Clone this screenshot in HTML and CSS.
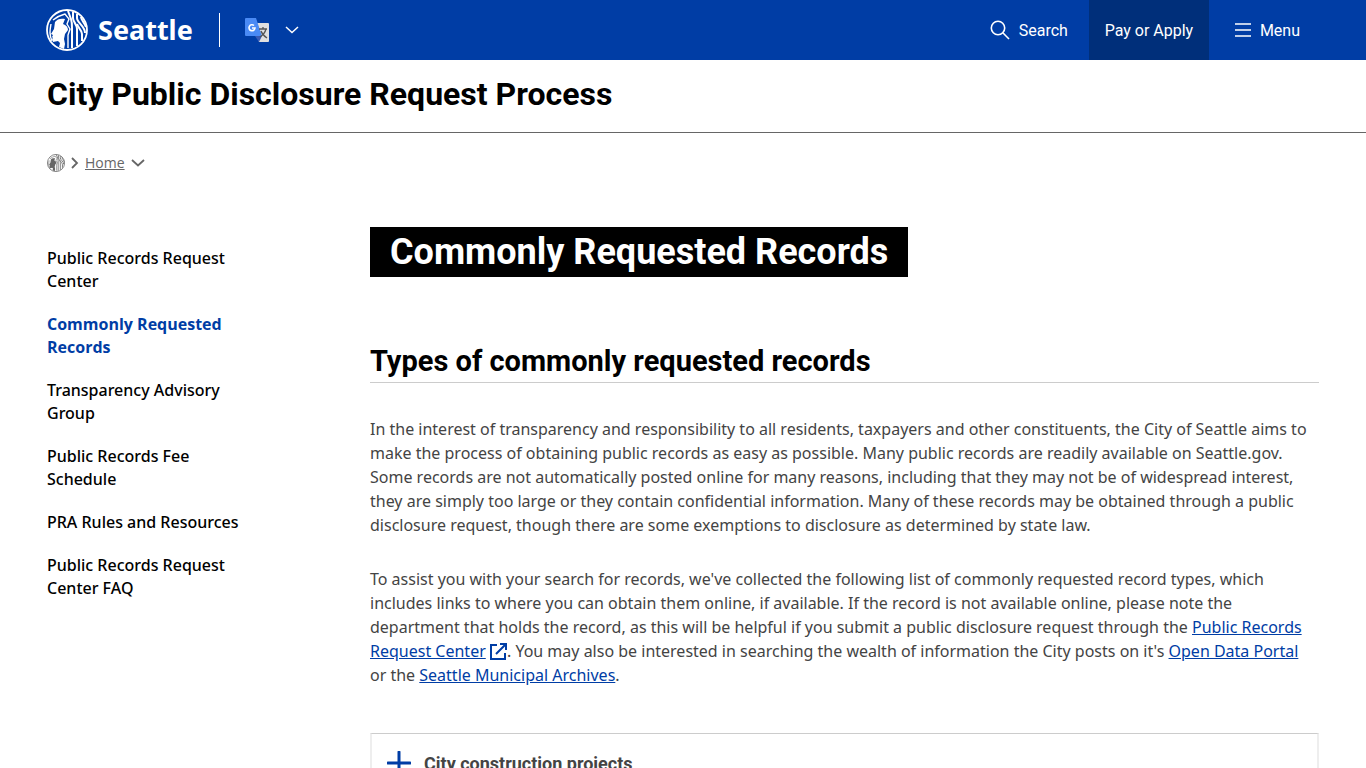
FILE: index.html
```html
<!DOCTYPE html>
<html lang="en">
<head>
    <meta charset="UTF-8">
    <meta name="viewport" content="width=device-width, initial-scale=1.0">
    <title>Commonly Requested Records - City Public Disclosure Request Process</title>
    <link rel="stylesheet" href="styles.css">
</head>
<body>
    <!-- Seal shared by the header and the breadcrumb -->
    <svg class="sprite" width="0" height="0" aria-hidden="true">
        <symbol id="seal" viewBox="0 0 42 42">
            <circle cx="21" cy="21" r="20" fill="none" stroke="currentColor" stroke-width="1.8"/>
            <path fill="currentColor" d="M9 13c2-3 6-4 10-3l-2 5c3 1 5 3 5 6l-3 4-1 5 1 5-1 5-5-2 1-4-2-2-5 1-1-3 1-1-1-1 1-2-2-1 3-5z"/>
            <g fill="none" stroke="currentColor" stroke-width="2">
                <path d="M7 11c4-3 8-5 12-6l4 5-2 5 3 5-2 6v13" stroke-width="1.4"/>
                <path d="M5 15c-1 6-2 10 1 17" stroke-width="1.4"/>
                <path d="M22 2l3 8c1 3 1 6 1 9v20"/>
                <path d="M27 3v6c0 4 4 6 4 11v17"/>
                <path d="M31 5v4c0 5 8 8 8 15"/>
                <path d="M31 15c1 4 5 6 5 10v7"/>
                <path d="M35 8c0 3 4 6 5 10"/>
            </g>
        </symbol>
    </svg>

    <header class="topbar">
        <a class="brand" href="#">
            <svg class="brand-seal" aria-hidden="true"><use href="#seal"/></svg>
            <span>Seattle</span>
        </a>
        <button class="translate" type="button" aria-label="Translate this page">
            <svg width="26" height="26" viewBox="0 0 26 26" aria-hidden="true">
                <path fill="#e0e0e0" d="M10 6h14a1 1 0 0 1 1 1v17a1 1 0 0 1-1 1H15z"/>
                <path fill="#3a5bb5" d="M11 19h7l-3 6z"/>
                <path fill="#4a8af4" d="M2 1h10l6 18H2a1 1 0 0 1-1-1V2a1 1 0 0 1 1-1z"/>
                <path fill="none" stroke="#fff" stroke-width="1.6" d="M10 8.500a3 3 0 1 0 1 2.500H8"/>
                <path fill="none" stroke="#555" stroke-width="1.3" d="M15 12h8M19 10v2M22 12c-1 4-3 6-6 8M17 14c1 3 3 5 6 7"/>
            </svg>
            <svg width="14" height="8" viewBox="0 0 14 8" aria-hidden="true">
                <path fill="none" stroke="currentColor" stroke-width="1.5" d="M1 1l6 5.5L13 1"/>
            </svg>
        </button>
        <nav class="tools" aria-label="Site tools">
            <button class="tool search" type="button">
                <svg width="20" height="20" viewBox="0 0 20 20" aria-hidden="true">
                    <g fill="none" stroke="currentColor" stroke-width="1.6"><circle cx="8" cy="8" r="6.7"/><path d="M12.8 12.8L19 19"/></g>
                </svg>
                Search
            </button>
            <button class="tool pay" type="button">Pay or Apply</button>
            <button class="tool menu" type="button">
                <svg width="16" height="14" viewBox="0 0 16 14" aria-hidden="true">
                    <path stroke="currentColor" stroke-width="1.5" d="M0 1h16M0 7h16M0 13h16"/>
                </svg>
                Menu
            </button>
        </nav>
    </header>

    <div class="site-title">
        <a href="#">City Public Disclosure Request Process</a>
    </div>

    <nav class="breadcrumb" aria-label="Breadcrumb">
        <a href="#" aria-label="Seattle.gov"><svg class="crumb-seal" aria-hidden="true"><use href="#seal"/></svg></a>
        <svg width="8" height="12" viewBox="0 0 8 12" aria-hidden="true"><path fill="none" stroke="currentColor" stroke-width="1.8" d="M1 1l5 5-5 5"/></svg>
        <a class="crumb-home" href="#">Home</a>
        <svg width="14" height="8" viewBox="0 0 14 8" aria-hidden="true"><path fill="none" stroke="currentColor" stroke-width="1.8" d="M1 1l6 5.5L13 1"/></svg>
    </nav>

    <div class="page">
        <nav class="sidebar" aria-label="Section">
            <ul>
                <li><a href="#">Public Records Request Center</a></li>
                <li><a class="current" href="#" aria-current="page">Commonly Requested Records</a></li>
                <li><a href="#">Transparency Advisory Group</a></li>
                <li><a href="#">Public Records Fee Schedule</a></li>
                <li><a href="#">PRA Rules and Resources</a></li>
                <li><a href="#">Public Records Request Center FAQ</a></li>
            </ul>
        </nav>

        <main class="content">
            <h1>Commonly Requested Records</h1>
            <h2>Types of commonly requested records</h2>
            <p>In the interest of transparency and responsibility to all residents, taxpayers and other constituents, the City of Seattle aims to make the process of obtaining public records as easy as possible. Many public records are readily available on Seattle.gov. Some records are not automatically posted online for many reasons, including that they may not be of widespread interest, they are simply too large or they contain confidential information. Many of these records may be obtained through a public disclosure request, though there are some exemptions to disclosure as determined by state law.</p>
            <p>To assist you with your search for records, we've collected the following list of commonly requested record types, which includes links to where you can obtain them online, if available. If the record is not available online, please note the department that holds the record, as this will be helpful if you submit a public disclosure request through the <a href="#">Public Records Request Center</a> <svg class="external" width="17" height="17" viewBox="0 0 17 17" aria-hidden="true"><path fill="none" stroke="currentColor" stroke-width="2" d="M7 2H1v14h14v-6M6 11l9-9M10 1h6v6"/></svg>. You may also be interested in searching the wealth of information the City posts on it's <a href="#">Open Data Portal</a> or&nbsp;the <a href="#">Seattle Municipal Archives</a>.</p>

            <div class="accordion">
                <button type="button" aria-expanded="false">
                    <svg width="24" height="24" viewBox="0 0 24 24" aria-hidden="true"><path stroke="currentColor" stroke-width="3" stroke-linecap="round" d="M12 1v22M1 12h22"/></svg>
                    <span>City construction projects</span>
                </button>
            </div>
        </main>
    </div>
</body>
</html>
```
FILE: styles.css
```css
* {
    box-sizing: border-box;
}
body {
    margin: 0;
    font-family: "Noto Sans", "Open Sans", sans-serif;
    font-size: 16px;
    line-height: 24px;
    color: #444;
    background-color: #fff;
}
button {
    font-family: inherit;
    border: 0;
    padding: 0;
    background: none;
    cursor: pointer;
}
.sprite {
    position: absolute;
}

/* Header */
.topbar {
    display: flex;
    align-items: center;
    height: 60px;
    padding: 0 46px;
    color: #fff;
    background-color: #003da5;
}
.brand {
    display: flex;
    align-items: center;
    gap: 10px;
    height: 34px;
    padding-right: 26px;
    border-right: 1px solid #fff;
    color: #fff;
    font-size: 27px;
    font-weight: 700;
    text-decoration: none;
}
.brand-seal {
    width: 42px;
    height: 42px;
}
.translate {
    display: flex;
    align-items: center;
    gap: 15px;
    margin-left: 24px;
    color: #fff;
}
.tools {
    display: flex;
    align-self: stretch;
    margin-left: auto;
}
.tool {
    display: flex;
    align-items: center;
    gap: 9px;
    color: #fff;
    font-family: Roboto, sans-serif;
    font-size: 16px;
}
.search {
    padding: 0 21px;
}
.pay {
    justify-content: center;
    width: 120px;
    background-color: #002f7a;
}
.menu {
    padding: 0 20px 0 26px;
}

/* Title and breadcrumb */
.site-title {
    padding: 12px 47px 16px;
    border-bottom: 1px solid #666;
    font-family: Roboto, sans-serif;
    font-size: 32px;
    font-weight: 700;
    line-height: 44px;
}
.site-title a {
    color: #000;
    text-decoration: none;
}
.breadcrumb {
    display: flex;
    align-items: center;
    gap: 6px;
    padding: 18px 47px;
    color: #666;
    font-family: "Open Sans", sans-serif;
    font-size: 14px;
}
.breadcrumb a {
    color: inherit;
}
.crumb-seal {
    display: block;
    width: 18px;
    height: 18px;
}

/* Page columns */
.page {
    display: grid;
    grid-template-columns: 200px 1fr;
    gap: 123px;
    padding: 34px 47px 60px;
}
.sidebar ul {
    margin: 20px 0 0;
    padding: 0;
    list-style: none;
}
.sidebar li {
    margin-bottom: 20px;
    line-height: 23px;
}
.sidebar a {
    color: #000;
    font-weight: 500;
    text-decoration: none;
}
.sidebar .current {
    color: #003da5;
    font-family: "Open Sans", sans-serif;
    font-weight: 700;
}
h1 {
    width: fit-content;
    margin: 0 0 64px;
    padding: 0 20px;
    color: #fff;
    background-color: #000;
    font-family: Roboto, sans-serif;
    font-size: 36px;
    line-height: 50px;
}
h2 {
    margin: 0 0 34px;
    padding-bottom: 1px;
    border-bottom: 1px solid #ccc;
    color: #000;
    font-family: Roboto, sans-serif;
    font-size: 29px;
    line-height: 40px;
}
p {
    margin: 0 0 30px;
}
p a {
    color: #003da5;
}
.external {
    color: #003da5;
    vertical-align: -3px;
}
.accordion {
    margin-top: 46px;
    border: 1px solid #ccc;
    border-right: 2px solid #eee;
    border-left: 2px solid #eee;
}
.accordion button {
    display: flex;
    align-items: center;
    gap: 13px;
    width: 100%;
    height: 58px;
    padding: 0 15px;
    color: #003da5;
    font-family: Roboto, sans-serif;
    font-size: 18px;
    font-weight: 700;
}
.accordion span {
    color: #444;
}
```
